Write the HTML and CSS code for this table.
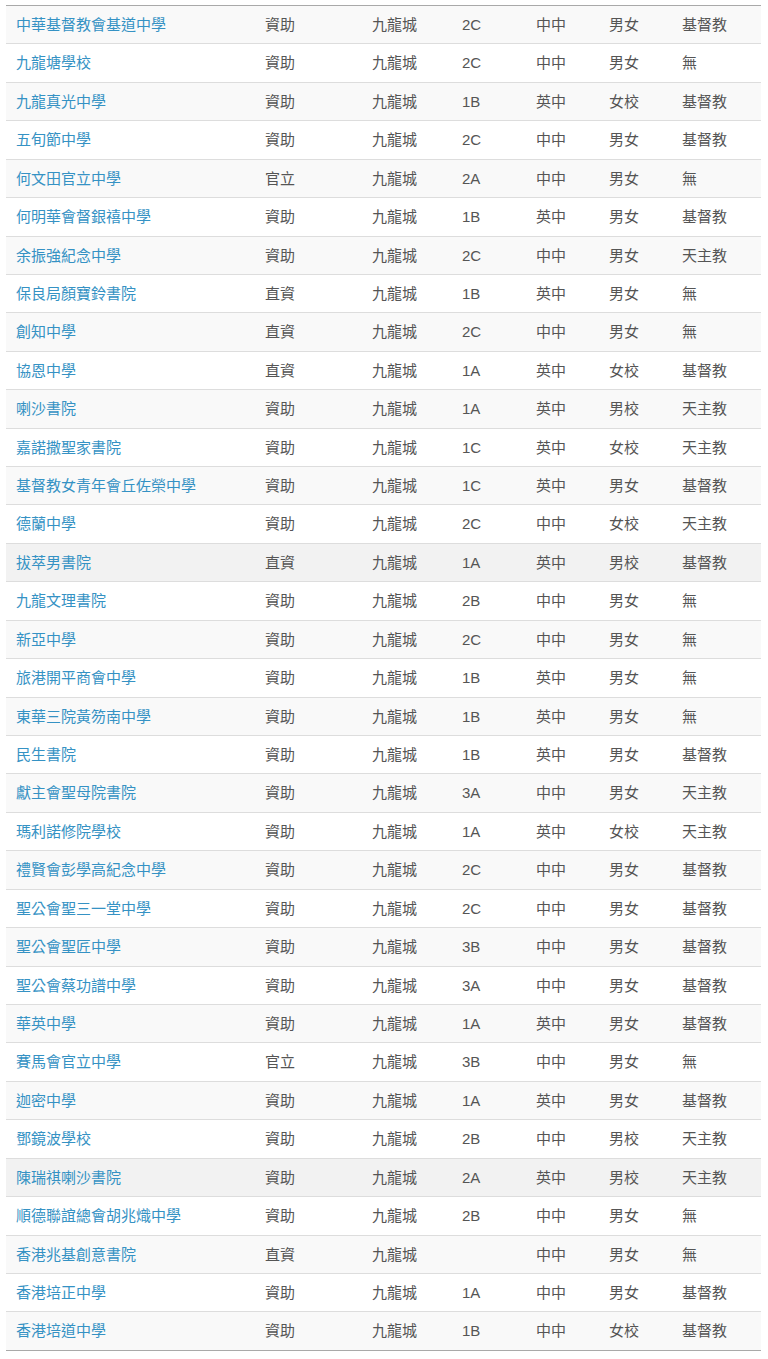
FILE: index.html
```html
<!DOCTYPE html>
<html lang="zh-Hant">
<head>
<meta charset="utf-8">
<title>九龍城中學</title>
<link rel="stylesheet" href="styles.css">
</head>
<body>
<div class="wrap">
<table class="schools">
<colgroup>
<col class="c-name"><col class="c-type"><col class="c-dist"><col class="c-band"><col class="c-lang"><col class="c-sex"><col class="c-rel">
</colgroup>
<tbody>
<tr><td><a href="#">中華基督教會基道中學</a></td><td>資助</td><td>九龍城</td><td>2C</td><td>中中</td><td>男女</td><td>基督教</td></tr>
<tr><td><a href="#">九龍塘學校</a></td><td>資助</td><td>九龍城</td><td>2C</td><td>中中</td><td>男女</td><td>無</td></tr>
<tr><td><a href="#">九龍真光中學</a></td><td>資助</td><td>九龍城</td><td>1B</td><td>英中</td><td>女校</td><td>基督教</td></tr>
<tr><td><a href="#">五旬節中學</a></td><td>資助</td><td>九龍城</td><td>2C</td><td>中中</td><td>男女</td><td>基督教</td></tr>
<tr><td><a href="#">何文田官立中學</a></td><td>官立</td><td>九龍城</td><td>2A</td><td>中中</td><td>男女</td><td>無</td></tr>
<tr><td><a href="#">何明華會督銀禧中學</a></td><td>資助</td><td>九龍城</td><td>1B</td><td>英中</td><td>男女</td><td>基督教</td></tr>
<tr><td><a href="#">余振強紀念中學</a></td><td>資助</td><td>九龍城</td><td>2C</td><td>中中</td><td>男女</td><td>天主教</td></tr>
<tr><td><a href="#">保良局顏寶鈴書院</a></td><td>直資</td><td>九龍城</td><td>1B</td><td>英中</td><td>男女</td><td>無</td></tr>
<tr><td><a href="#">創知中學</a></td><td>直資</td><td>九龍城</td><td>2C</td><td>中中</td><td>男女</td><td>無</td></tr>
<tr><td><a href="#">協恩中學</a></td><td>直資</td><td>九龍城</td><td>1A</td><td>英中</td><td>女校</td><td>基督教</td></tr>
<tr><td><a href="#">喇沙書院</a></td><td>資助</td><td>九龍城</td><td>1A</td><td>英中</td><td>男校</td><td>天主教</td></tr>
<tr><td><a href="#">嘉諾撒聖家書院</a></td><td>資助</td><td>九龍城</td><td>1C</td><td>英中</td><td>女校</td><td>天主教</td></tr>
<tr><td><a href="#">基督教女青年會丘佐榮中學</a></td><td>資助</td><td>九龍城</td><td>1C</td><td>英中</td><td>男女</td><td>基督教</td></tr>
<tr><td><a href="#">德蘭中學</a></td><td>資助</td><td>九龍城</td><td>2C</td><td>中中</td><td>女校</td><td>天主教</td></tr>
<tr class="hl"><td><a href="#">拔萃男書院</a></td><td>直資</td><td>九龍城</td><td>1A</td><td>英中</td><td>男校</td><td>基督教</td></tr>
<tr><td><a href="#">九龍文理書院</a></td><td>資助</td><td>九龍城</td><td>2B</td><td>中中</td><td>男女</td><td>無</td></tr>
<tr><td><a href="#">新亞中學</a></td><td>資助</td><td>九龍城</td><td>2C</td><td>中中</td><td>男女</td><td>無</td></tr>
<tr><td><a href="#">旅港開平商會中學</a></td><td>資助</td><td>九龍城</td><td>1B</td><td>英中</td><td>男女</td><td>無</td></tr>
<tr><td><a href="#">東華三院黃笏南中學</a></td><td>資助</td><td>九龍城</td><td>1B</td><td>英中</td><td>男女</td><td>無</td></tr>
<tr><td><a href="#">民生書院</a></td><td>資助</td><td>九龍城</td><td>1B</td><td>英中</td><td>男女</td><td>基督教</td></tr>
<tr><td><a href="#">獻主會聖母院書院</a></td><td>資助</td><td>九龍城</td><td>3A</td><td>中中</td><td>男女</td><td>天主教</td></tr>
<tr><td><a href="#">瑪利諾修院學校</a></td><td>資助</td><td>九龍城</td><td>1A</td><td>英中</td><td>女校</td><td>天主教</td></tr>
<tr><td><a href="#">禮賢會彭學高紀念中學</a></td><td>資助</td><td>九龍城</td><td>2C</td><td>中中</td><td>男女</td><td>基督教</td></tr>
<tr><td><a href="#">聖公會聖三一堂中學</a></td><td>資助</td><td>九龍城</td><td>2C</td><td>中中</td><td>男女</td><td>基督教</td></tr>
<tr><td><a href="#">聖公會聖匠中學</a></td><td>資助</td><td>九龍城</td><td>3B</td><td>中中</td><td>男女</td><td>基督教</td></tr>
<tr><td><a href="#">聖公會蔡功譜中學</a></td><td>資助</td><td>九龍城</td><td>3A</td><td>中中</td><td>男女</td><td>基督教</td></tr>
<tr><td><a href="#">華英中學</a></td><td>資助</td><td>九龍城</td><td>1A</td><td>英中</td><td>男女</td><td>基督教</td></tr>
<tr><td><a href="#">賽馬會官立中學</a></td><td>官立</td><td>九龍城</td><td>3B</td><td>中中</td><td>男女</td><td>無</td></tr>
<tr><td><a href="#">迦密中學</a></td><td>資助</td><td>九龍城</td><td>1A</td><td>英中</td><td>男女</td><td>基督教</td></tr>
<tr><td><a href="#">鄧鏡波學校</a></td><td>資助</td><td>九龍城</td><td>2B</td><td>中中</td><td>男校</td><td>天主教</td></tr>
<tr class="hl"><td><a href="#">陳瑞祺喇沙書院</a></td><td>資助</td><td>九龍城</td><td>2A</td><td>英中</td><td>男校</td><td>天主教</td></tr>
<tr><td><a href="#">順德聯誼總會胡兆熾中學</a></td><td>資助</td><td>九龍城</td><td>2B</td><td>中中</td><td>男女</td><td>無</td></tr>
<tr><td><a href="#">香港兆基創意書院</a></td><td>直資</td><td>九龍城</td><td></td><td>中中</td><td>男女</td><td>無</td></tr>
<tr><td><a href="#">香港培正中學</a></td><td>資助</td><td>九龍城</td><td>1A</td><td>中中</td><td>男女</td><td>基督教</td></tr>
<tr><td><a href="#">香港培道中學</a></td><td>資助</td><td>九龍城</td><td>1B</td><td>中中</td><td>女校</td><td>基督教</td></tr>
</tbody>
</table>
</div>
</body>
</html>
```

FILE: styles.css
```css
html, body {
  margin: 0;
  padding: 0;
  background: #fff;
}
body {
  font-family: "Liberation Sans", "Noto Sans CJK TC", sans-serif;
  font-size: 15px;
  line-height: 1.42857143;
  color: #555;
}
.wrap {
  padding: 5px 7px 0 6px;
}
.schools {
  width: 100%;
  border-collapse: collapse;
  border-spacing: 0;
  table-layout: fixed;
  border-top: 1px solid #a9a9a9;
  border-bottom: 1px solid #a9a9a9;
}
.c-name { width: 249px; }
.c-type { width: 107px; }
.c-dist { width: 90px; }
.c-band { width: 74px; }
.c-lang { width: 73px; }
.c-sex  { width: 73px; }
.c-rel  { width: auto; }
.schools td {
  padding: 8px 10px;
  border-top: 1px solid #ddd;
  vertical-align: top;
  white-space: nowrap;
}
.schools tr:first-child td {
  border-top: 0;
}
.schools tr:nth-child(odd) {
  background: #f9f9f9;
}
.schools tr.hl {
  background: #f2f2f2;
}
.schools a {
  color: #3592c4;
  text-decoration: none;
}
```
